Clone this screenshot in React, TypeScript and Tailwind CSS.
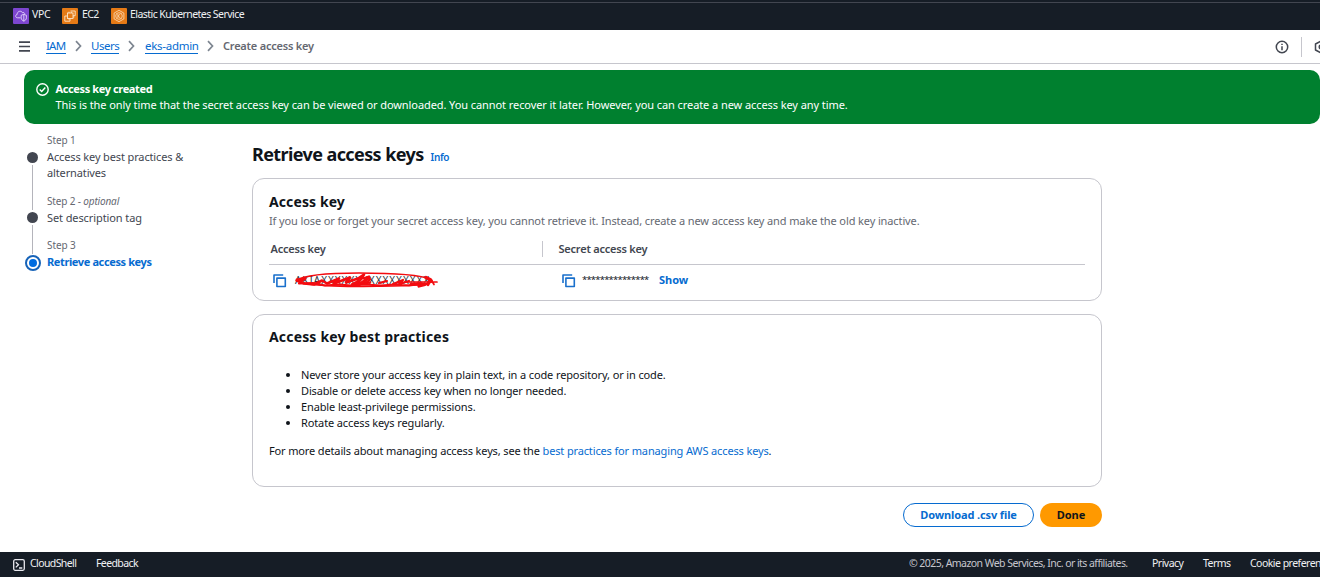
import React from "react";

const link = "text-[#066bd0]";

function VpcIcon() {
  return (
    <svg width="16" height="16" viewBox="0 0 16 16" fill="none" stroke="#efe6ff" strokeWidth="0.8">
      <rect width="16" height="16" rx="1" fill="#7d46d0" stroke="none" />
      <path d="M7.500 9.800H4.600C2.200 9.800 2 6.900 4.100 6.500 4.100 3 8.300 2.200 9.500 4.700c1.100-.6 2.200.1 2.200 1.200" />
      <path d="M10.800 6.300l2.600 1v2.500c0 1.700-1.200 2.700-2.600 3.400-1.400-.7-2.600-1.700-2.600-3.400V7.300zM10.800 6.300v6.700" />
    </svg>
  );
}

function Ec2Icon() {
  return (
    <svg width="16" height="16" viewBox="0 0 16 16" fill="none" stroke="#fff0dc" strokeWidth="0.8">
      <rect width="16" height="16" rx="1" fill="#e57a16" stroke="none" />
      <rect x="5.500" y="5" width="5.500" height="5.500" />
      <path d="M5.500 8H2.800v5.200H8v-2.700M8.500 3h4.700v4.700H11M7 3.700V5M9.300 3.700V5M11 9h1.300M7 10.500v1.200" />
    </svg>
  );
}

function EksIcon() {
  return (
    <svg width="16" height="16" viewBox="0 0 16 16" fill="none" stroke="#ffecd2" strokeWidth="0.7">
      <rect width="16" height="16" rx="1" fill="#e57a16" stroke="none" />
      <path d="M8 2.300l4.900 2.800v5.800L8 13.700l-4.900-2.800V5.100z" />
      <circle cx="8" cy="8" r="3.300" />
      <path d="M6.900 6v4M9.300 6L7.100 8l2.200 2" />
    </svg>
  );
}

function Chevron() {
  return (
    <svg className="shrink-0" width="7" height="12" viewBox="0 0 7 12" fill="none" stroke="#7d8590" strokeWidth="1.700">
      <path d="M1 1.200L5.500 6 1 10.800" />
    </svg>
  );
}

function CopyIcon() {
  return (
    <svg width="14" height="14" viewBox="0 0 14 14" fill="none" stroke="#1a70cc" strokeWidth="1.600" strokeLinejoin="round">
      <path d="M1 9V1H10.200" />
      <rect x="3.900" y="4.100" width="8.400" height="8.400" />
    </svg>
  );
}

function Scribble() {
  return (
    <svg className="absolute -left-[2px] -top-[4px]" width="148" height="20" viewBox="0 0 148 20" fill="none" stroke="#f30c10" strokeLinecap="round" strokeLinejoin="round">
      <path strokeWidth="1.600" d="M3 10.500C12 4.500 36 3 66 3 98 3 128 5 138 9.500c6 4-12 6-38 6.500C64 17 8 16.500 3 10.500z" />
      <path strokeWidth="2.600" d="M4 9.500l7 4 10 1 8-4 5 3 12-5-5 5 16-6-4 5 12-4 6-4-4 6-8 4 18-2" />
      <path strokeWidth="2.200" d="M6 13.500l14-.5 12 2.500 14-1 12 1 14-1 16 1 14-1 14 1 12-1.500M70 8.500l6-2 1 3-6 5M86 13l8-2M100 14l10-4-4 4 10-3" />
      <path strokeWidth="3.200" d="M118 14.500l9-1 5 1-6 1.500M133 7.500l4 2-2 5M66 14.500l9-6M12 8.500l-5 2" />
      <path strokeWidth="1.700" d="M112 12h32M138 9.500l3 5" />
    </svg>
  );
}

function Crumb({ className, children }: { className: string; children: React.ReactNode }) {
  return (
    <a className={`${link} whitespace-nowrap border-b border-[#066bd0] leading-[15px] ${className}`}>{children}</a>
  );
}

function TopBar() {
  return (
    <nav className="flex h-[30px] shrink-0 flex-col bg-[#161d26] text-[10.5px] text-[#f0f1f3]">
      <div className="mt-[2px] h-px shrink-0 bg-[#424650]" />
      <div className="flex h-[25px] items-center pl-[13px]">
        <VpcIcon />
        <span className="-mt-px ml-[3px] w-[30px] tracking-[-0.3px]">VPC</span>
        <Ec2Icon />
        <span className="-mt-px ml-[4px] w-[29px] tracking-[-0.6px]">EC2</span>
        <EksIcon />
        <span className="-mt-px ml-[3px] tracking-[-0.55px]">Elastic Kubernetes Service</span>
      </div>
    </nav>
  );
}

function Header() {
  return (
    <header className="flex h-[34px] shrink-0 items-center border-b border-[#c6c6cd] text-[11.5px]">
      <svg className="ml-[19px]" width="11" height="11" viewBox="0 0 11 11" stroke="#424650" strokeWidth="1.700">
        <path d="M0 1.200h11M0 5.500h11M0 9.800h11" />
      </svg>
      <div className="-mt-px ml-[16px] flex items-center">
        <Crumb className="w-[20px] tracking-[-0.8px]">IAM</Crumb>
        <div className="mx-[9px] flex"><Chevron /></div>
        <Crumb className="w-[28px] tracking-[-0.5px]">Users</Crumb>
        <div className="ml-[9px] mr-[10px] flex"><Chevron /></div>
        <Crumb className="w-[53px] tracking-[-0.28px]">eks-admin</Crumb>
        <div className="ml-[9px] mr-[9px] flex"><Chevron /></div>
        <span className="text-[11px] font-semibold tracking-[-0.22px] text-[#656871]">Create access key</span>
      </div>
      <div className="ml-auto flex items-center">
        <svg width="14" height="14" viewBox="0 0 14 14" fill="none" stroke="#424650" strokeWidth="1.500">
          <circle cx="7" cy="7" r="5.700" />
          <path d="M7 6.200v4M7 3.700v1.400" />
        </svg>
        <div className="ml-[12px] h-[20px] w-px bg-[#c6c6cd]" />
        <div className="ml-[12px] w-[6px] overflow-hidden">
          <svg width="14" height="14" viewBox="0 0 14 14" fill="none" stroke="#424650" strokeWidth="1.500" strokeLinejoin="round">
            <path d="M7 1l5.500 3v6L7 13l-5.500-3V4z" />
            <circle cx="7" cy="7" r="1.800" />
          </svg>
        </div>
      </div>
    </header>
  );
}

function Banner() {
  return (
    <section className="ml-[24px] mt-[6px] flex h-[54px] shrink-0 rounded-[10px] bg-[#00802f] pl-[12px] pt-[11px] text-[11px] leading-[16px] text-white">
      <svg className="mt-[2px]" width="13" height="13" viewBox="0 0 13 13" fill="none" stroke="white" strokeWidth="1.400">
        <circle cx="6.500" cy="6.500" r="5.700" />
        <path d="M3.700 6.500l2 2 3.600-4" />
      </svg>
      <div className="ml-[6.5px]">
        <div className="font-bold tracking-[-0.38px]">Access key created</div>
        <div className="tracking-[-0.078px]">This is the only time that the secret access key can be viewed or downloaded. You cannot recover it later. However, you can create a new access key any time.</div>
      </div>
    </section>
  );
}

function Dot() {
  return <div className="h-[11px] w-[11px] shrink-0 rounded-full bg-[#424650]" />;
}

function Steps() {
  return (
    <aside className="flex w-[228px] shrink-0 pt-[8px] text-[11px] leading-[16px] text-[#424650]">
      <div className="flex w-[17px] flex-col items-center pt-[20px]">
        <Dot />
        <div className="my-[2px] h-[45px] w-px bg-[#b4b4bb]" />
        <Dot />
        <div className="mb-[1px] mt-[2px] h-[29px] w-px bg-[#b4b4bb]" />
        <div className="flex h-[16px] w-[16px] shrink-0 items-center justify-center rounded-full border-2 border-[#1763b8]">
          <div className="h-[8px] w-[8px] rounded-full bg-[#006ce0]" />
        </div>
      </div>
      <div className="ml-[6px]">
        <div className="mb-px h-[16px] text-[10px] tracking-[-0.1px] text-[#656871]">Step 1</div>
        <div className="w-[150px] tracking-[-0.13px]">Access key best practices &amp; alternatives</div>
        <div className="mt-[12px] text-[10px] tracking-[-0.15px] text-[#656871]">Step 2 - <i>optional</i></div>
        <div className="mt-px tracking-[-0.1px]">Set description tag</div>
        <div className="mt-[11px] text-[10px] tracking-[-0.1px] text-[#656871]">Step 3</div>
        <div className={`${link} mt-px font-bold tracking-[-0.38px]`}>Retrieve access keys</div>
      </div>
    </aside>
  );
}

function AccessKeyCard() {
  return (
    <section className="mt-[12px] h-[123px] rounded-[12px] border border-[#c6c6cd] px-[16px] pt-[13px]">
      <h2 className="text-[14px] font-bold leading-[20px] tracking-[0.1px]">Access key</h2>
      <p className="leading-[18px] tracking-[-0.115px] text-[#656871]">If you lose or forget your secret access key, you cannot retrieve it. Instead, create a new access key and make the old key inactive.</p>
      <div className="mt-[11px] flex h-[24px] border-b border-[#c6c6cd] font-semibold leading-[16px] tracking-[-0.22px] text-[#424650]">
        <div className="w-[273px] pl-[1.5px]">Access key</div>
        <div className="h-[16px] border-l border-[#c6c6cd] pl-[15.5px]">Secret access key</div>
      </div>
      <div className="flex h-[31px] items-center">
        <div className="flex w-[289px] items-center pl-[4px]">
          <CopyIcon />
          <div className="relative ml-[8px] flex h-[14px] w-[140px] items-center text-[10px] tracking-[0.95px] text-[#2b2f38]">
            <span>AKIAXXXXXXXXXXXXXXXX</span>
            <Scribble />
          </div>
        </div>
        <div className="flex items-center pl-[4px]">
          <CopyIcon />
          <span className="ml-[6px] w-[77px] text-[9.500px] tracking-[-0.8px]">***************</span>
          <span className={`${link} font-bold`}>Show</span>
        </div>
      </div>
    </section>
  );
}

function PracticesCard() {
  return (
    <section className="mt-[13px] h-[173px] rounded-[12px] border border-[#c6c6cd] px-[16px] pt-[12px] leading-[16px] tracking-[-0.125px]">
      <h2 className="text-[14px] font-bold leading-[20px] tracking-[0.17px]">Access key best practices</h2>
      <ul className="mt-[20px] list-disc pl-[32px]">
        <li>Never store your access key in plain text, in a code repository, or in code.</li>
        <li className="tracking-[-0.15px]">Disable or delete access key when no longer needed.</li>
        <li>Enable least-privilege permissions.</li>
        <li>Rotate access keys regularly.</li>
      </ul>
      <p className="mt-[12px] tracking-[-0.14px]">
        For more details about managing access keys, see the <a className={link}>best practices for managing AWS access keys</a>.
      </p>
    </section>
  );
}

function Footer() {
  return (
    <footer className="flex h-[25px] shrink-0 items-center bg-[#161d26] pl-[13px] text-[10.5px] text-[#f0f1f3]">
      <svg width="12" height="12" viewBox="0 0 12 12" fill="none" stroke="#e8e8ee" strokeWidth="1.300">
        <rect x=".7" y=".7" width="10.600" height="10.600" rx="1.500" />
        <path d="M2.800 3.200l2.700 2.600-2.700 2.600M6 9h3.300" />
      </svg>
      <span className="-mt-px ml-[5px] w-[66px] tracking-[-0.6px]">CloudShell</span>
      <span className="-mt-px tracking-[-0.6px]">Feedback</span>
      <div className="-mt-px ml-auto flex w-[411px] overflow-hidden whitespace-nowrap tracking-[-0.52px]">
        <span className="w-[243px] shrink-0 tracking-[-0.55px] text-[#c6c6cd]">© 2025, Amazon Web Services, Inc. or its affiliates.</span>
        <span className="w-[51px] shrink-0">Privacy</span>
        <span className="w-[47px] shrink-0">Terms</span>
        <span className="shrink-0">Cookie preferences</span>
      </div>
    </footer>
  );
}

export default function App() {
  return (
    <div className="flex h-[577px] w-[1320px] flex-col overflow-hidden bg-white font-['Noto_Sans',sans-serif] text-[11px] text-[#0f141a]">
      <TopBar />
      <Header />
      <Banner />
      <div className="flex flex-1 pl-[24px]">
        <Steps />
        <main className="w-[850px] pt-[18px]">
          <div className="flex h-[24px] items-baseline">
            <h1 className="text-[18px] font-bold leading-[24px] tracking-[-0.6px]">Retrieve access keys</h1>
            <a className={`${link} ml-[7px] text-[10px] font-semibold tracking-[-0.4px]`}>Info</a>
          </div>
          <AccessKeyCard />
          <PracticesCard />
          <div className="mt-[16px] flex justify-end gap-[6px] font-bold">
            <button className="h-[24px] w-[131px] rounded-full border border-[#066bd0] tracking-[-0.12px] text-[#066bd0]">Download .csv file</button>
            <button className="h-[24px] w-[62px] rounded-full bg-[#ff9900] text-[#0f141a]">Done</button>
          </div>
        </main>
      </div>
      <Footer />
    </div>
  );
}
